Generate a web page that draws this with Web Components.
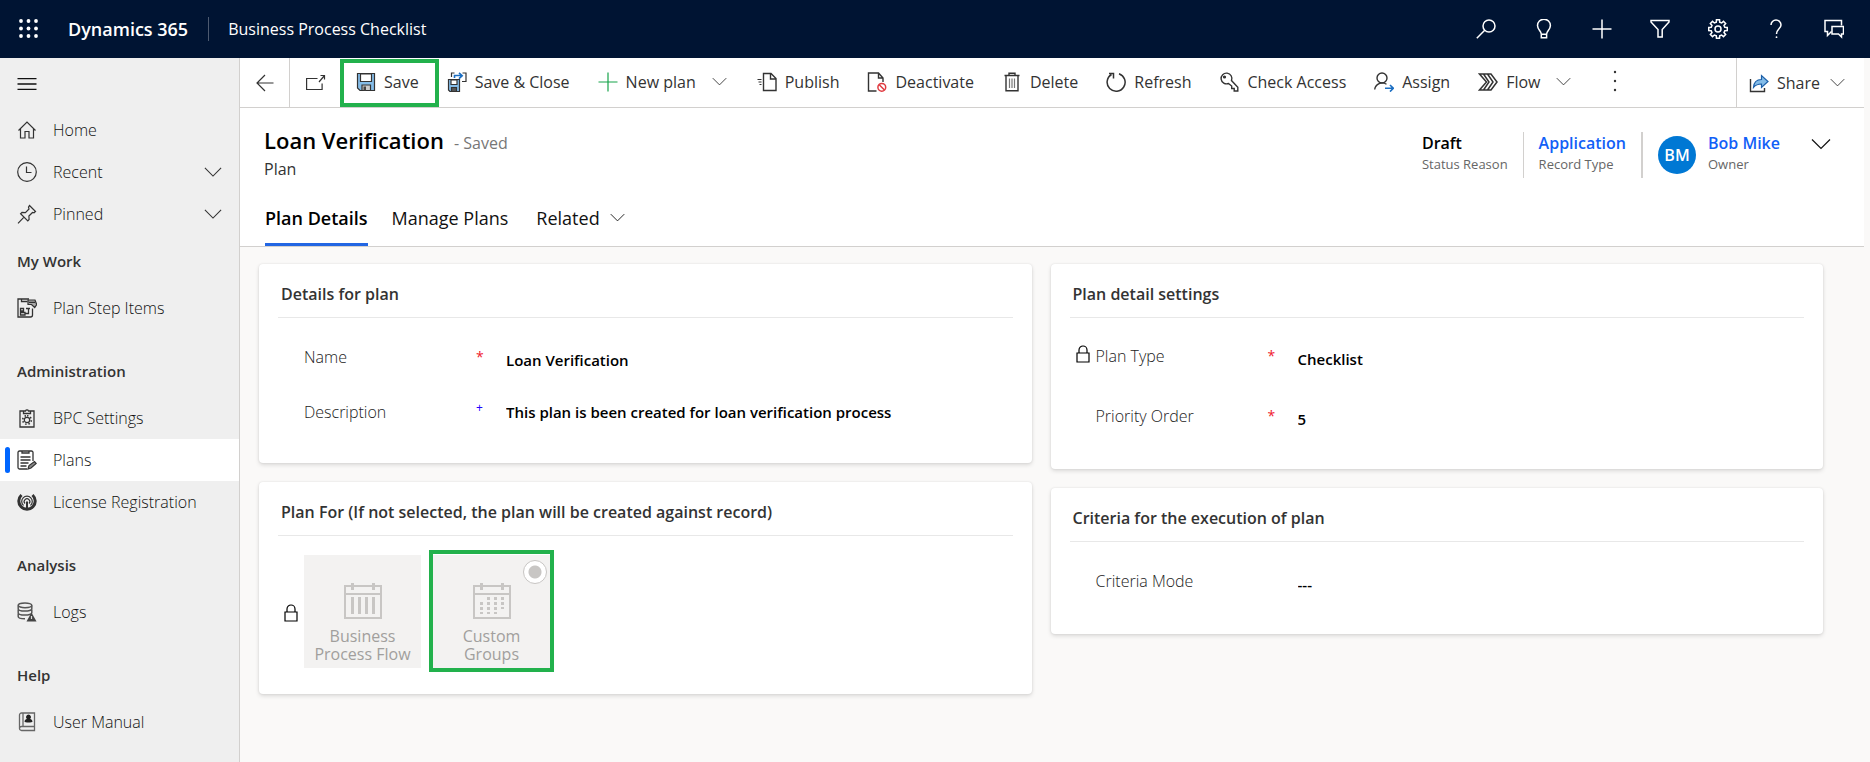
<!DOCTYPE html>
<html lang="en">
<head>
<meta charset="utf-8">
<title>Loan Verification - Business Process Checklist</title>
<style>
  body { margin: 0; background: #faf9f8; font: 300 16px/20px "Open Sans", "Noto Sans", sans-serif; color: #111; }
</style>
</head>
<body>
<plan-app></plan-app>
<script>
const define = (name, html, init) => {
  const template = document.createElement('template');
  template.innerHTML = html;
  customElements.define(name, class extends HTMLElement {
    constructor() {
      super();
      this.attachShadow({ mode: 'open' }).append(template.content.cloneNode(true));
    }
    connectedCallback() {
      if (init && !this.ready) init.call(this, this.shadowRoot);
      this.ready = true;
    }
  });
};

/* Outline of a gear wheel with n teeth */
const gear = (cx, cy, r, n, depth) => {
  let d = '';
  for (let i = 0; i < n; i++) {
    const a = i * 2 * Math.PI / n - Math.PI / 2, s = Math.PI / n;
    [[-.62, r - depth], [-.42, r], [.42, r], [.62, r - depth]].forEach(([k, q], j) => {
      d += (i || j ? 'L' : 'M') + (cx + q * Math.cos(a + k * s)).toFixed(2) + ' ' + (cy + q * Math.sin(a + k * s)).toFixed(2);
    });
  }
  return d + 'Z';
};

/* Icons: [width, height, markup]; strokes take the current colour */
const ICONS = {
  waffle: [20, 20, [2, 9.5, 17].map(y => [2, 9.5, 17].map(x => `<circle cx="${x}" cy="${y}" r="1.9" fill="currentColor" stroke="none"/>`).join('')).join('')],
  search: [20, 20, '<circle cx="13" cy="7" r="6"/><path d="M8.7 11.3 .8 19.2"/>'],
  bulb: [20, 20, '<path d="M7.3 15.2c0-3.2-3.8-4.4-3.8-8.6a6.3 6.3 0 0 1 12.9 0c0 4.2-3.8 5.4-3.8 8.6zM7.3 15.2v3.6h5.3v-3.6"/>'],
  plus: [20, 20, '<path d="M10 .5v19M.5 10h19"/>'],
  filter: [20, 20, '<path d="M1 1.500h18v1.500l-6.800 7.500v7.500h-4.200v-7.500L1 3z"/>'],
  gear: [20, 20, `<path d="${gear(10, 10, 9.4, 8, 2.4)}"/><circle cx="10" cy="10" r="3"/>`],
  help: [20, 20, '<path d="M5 6a5 5 0 1 1 10 0c0 3.600-4.500 4.300-4.500 9"/><circle cx="10.500" cy="18.200" r=".9" fill="currentColor" stroke="none"/>'],
  chat: [20, 20, '<path d="M17.500 6.500V1.500H1v11h2.500v4l4-4"/><path d="M8 7.500h11.500v7.500h-2v3l-3-3H8z"/>'],
  menu: [20, 12, '<path d="M.5.5h19M.5 6h19M.5 11.500h19"/>'],
  home: [20, 20, '<path d="M1.500 10.500 10 2l8.500 8.500M3.500 9v9h4.500v-6.500h4V18h4.500V9"/>'],
  clock: [20, 20, '<circle cx="10" cy="10" r="9.300"/><path d="M9.500 4.500v6h5"/>'],
  pin: [20, 20, '<path d="m12.500 1.500 6 6-1.500 1.300-1.500-.3-3.600 3.600.2 3.400-1.300 1.400L3.600 9.700 5 8.400l3.400.2L12 5l-.5-2zM7 13.200 1 19.300"/>'],
  chevron: [20, 20, '<path d="m1 5.500 9 9 9-9"/>'],
  back: [18, 18, '<path d="M17.500 9H1M9 1 1 9l8 8"/>'],
  popout: [20, 20, '<path d="M11.500 5.500H.6v11h15.500v-6M13 9l5.500-6.500M14.500 2.500h4v4"/>'],
  save: [20, 20, '<path fill="#84bce8" d="M1.500 1.500h17v17H4l-2.500-2.500z"/><path fill="#fff" d="M4.500 2h11v7.500h-11z"/><path fill="#ccc" d="M6 13h8.500v5.500H6z"/><path fill="#444" stroke="none" d="M7.500 14.500H10v4H7.500z"/>'],
  saveclose: [20, 20, '<path fill="#84bce8" d="M1.500 7.500h11v12H3l-1.500-1.500z"/><path fill="#fff" d="M4 8h6v4.500H4z"/><path fill="#555" d="M4.500 15.500h5v4h-5z"/><path d="M7.500 1H4.500v4M15.500 1H19v8.500h-4"/><path stroke="#1b6ec2" stroke-width="1.600" d="M7.500 6V3.500h7M12 .8l3.200 2.900L12 6.600"/>'],
  publish: [20, 20, '<path stroke-width="1.400" d="M6.500 1.500h7.500l5 5v12H6.500zM13.500 1.500V7H19"/><path d="M.5 7.500h4M1.500 10h3M2.500 12.500h2"/>'],
  deactivate: [20, 20, '<path stroke-width="1.400" d="M9.500 19H1.500V1h10l4.500 5v4M11.500 1v5H16"/><g stroke="#e03a40" stroke-width="1.500"><circle cx="14.800" cy="15.300" r="3.900"/><path d="m12.200 12.700 5.300 5.300"/></g>'],
  trash: [20, 20, '<path stroke-width="1.400" d="M2.500 3.500h15M7 3.500V1.300h6v2.200M4 3.500v15.200h12V3.500"/><path d="M7.500 6.500v9.500M10 6.500v9.500M12.500 6.500v9.500" stroke="#777"/>'],
  refresh: [20, 20, '<path stroke-width="1.500" d="M13 1.700a9 9 0 1 1-7.500.8M3 1.400h4.500v5"/>'],
  key: [20, 20, '<path stroke-width="1.400" d="M9.500 11.500a5.400 5.400 0 1 1 3-3l6.300 6.800v3.700h-3.600v-2.500h-2.500V14z"/><circle cx="5.500" cy="5" r="1" fill="currentColor"/>'],
  assign: [20, 20, '<g stroke-width="1.400"><circle cx="8" cy="6" r="5"/><path d="M.7 17.500a7.500 7.500 0 0 1 11.800-5.200"/><path stroke="#1b6ec2" stroke-width="1.600" d="M11 16.300h8M16 13l3.300 3.300L16 19.600"/></g>'],
  flow: [20, 20, '<path stroke-width="1.500" d="M1.500 2H13l6 8-6 8H1.500l7-8zM5.500 2l5.500 8-5.500 8M9.500 2l5.500 8-5.500 8"/>'],
  share: [20, 20, '<path stroke-width="1.400" d="M1.500 6v12.500h14V15"/><path fill="#84bce8" stroke="#1b5fa8" d="M4.500 14.500c.3-5 3-8 8-8V2.500L19 8.500l-6.500 6V11c-4 0-6 1-8 3.500z"/>'],
  dots: [4, 22, '<g fill="currentColor" stroke="none"><circle cx="2" cy="2" r="1.200"/><circle cx="2" cy="11" r="1.200"/><circle cx="2" cy="20" r="1.200"/></g>'],
  lock: [14, 18, '<path d="M1 8h12v9H1zM3 8V5a4 4 0 0 1 8 0v3"/>'],
  steps: [20, 20, '<path stroke-width="1.300" d="M15.500 10.500V17a2 2 0 0 1-2 2H1V1h11M4.500 1v2.500h6M3.500 10.500h3v2.500h-3zM9 10.500h4M11.500 10.500v5H8.500M3.500 14.500h4.500v2.500H3.500z"/><path fill="#aaa" d="M11 2h7l1.700 4.500-2 3-3.200-3H11zM12 4.300h6"/>'],
  clipboard: [20, 20, `<path stroke-width="1.300" d="M7 3H3v16h14V3h-4M6.500 5.500V3h2a1.600 1.600 0 0 1 3 0h2v2.500z"/><circle cx="10" cy="12" r="2.700"/><path stroke-width="1.600" stroke-dasharray="1.500 1.900" d="M10 7.700a4.300 4.300 0 1 1 0 8.600a4.300 4.300 0 1 1 0-8.600"/>`],
  plans: [20, 20, '<path stroke-width="1.300" d="M16 11V2.500A1.500 1.500 0 0 0 14.500 1h-12A1.500 1.500 0 0 0 1 2.500v15A1.500 1.500 0 0 0 2.500 19H10M5 1v2h7V1M3.500 7h10M3.500 10h10M3.500 13h8M3.500 16h6"/><path fill="#888" d="m11 19 1-3.500 5.500-4 1.700 2-5.200 4.500z"/>'],
  license: [20, 20, '<path stroke-width="3" d="M4.500 3a8.200 8.200 0 1 0 11 0"/><path stroke-width="1.200" d="M6.500 13.500a5.300 5.300 0 1 1 7 0M8 11.500a2.800 2.800 0 1 1 4 0"/><path stroke-width="2" d="M10 9.500V16"/>'],
  logs: [20, 20, '<g stroke="#555" stroke-width="1.500"><ellipse cx="8" cy="3.300" rx="6.800" ry="2.400"/><path d="M1.200 3.500v3.200c0 3.200 13.600 3.200 13.600 0V3.500M1.200 7.500v3.200c0 3.200 13.600 3.200 13.600 0V7.500M1.200 11.500v3c0 1.500 3 2.300 6.800 2.300"/></g><path fill="#444" stroke="none" d="m14.500 10.500 5 9h-10z"/><path stroke="#ddd" d="M14.500 14v3"/>'],
  manual: [20, 20, '<path stroke="#666" stroke-width="1.300" d="M17.500 1v17.500H4.500a2 2 0 0 1-2-2V3a2 2 0 0 1 2-2zM2.500 16a2 2 0 0 1 2-1.500h13M6 1v13.500"/><path fill="#222" stroke="none" d="M11.500 2.500a2.500 2.500 0 0 1 1.600 4.400c1.400.3 2.400 1.300 2.400 2.600s-8 1.300-8 0 1-2.300 2.400-2.600a2.500 2.500 0 0 1 1.600-4.400z"/>'],
  bars: [38, 36, '<g stroke-width="2"><path d="M1 3h36v32H1zM1 11h36"/><path stroke-width="3" d="M8.500 0v7M29.500 0v7M8.500 14v17M15.500 14v17M22.500 14v17M29.500 14v17"/></g>'],
  dates: [38, 36, '<g stroke-width="2"><path d="M1 3h36v32H1zM1 11h36"/><path stroke-width="3" d="M8.500 0v7M29.500 0v7"/><path stroke-width="3" stroke-dasharray="3 2" d="M15.500 14v17M22.500 14v17M29.500 14v12M8.500 19v12"/></g>']
};

customElements.define('ui-icon', class extends HTMLElement {
  static observedAttributes = ['name'];
  constructor() {
    super();
    this.attachShadow({ mode: 'open' });
  }
  attributeChangedCallback() { this.draw(); }
  connectedCallback() { this.draw(); }
  draw() {
    const icon = ICONS[this.getAttribute('name')];
    if (!icon) return;
    const [w, h, markup] = icon;
    const size = +this.getAttribute('size') || w;
    this.shadowRoot.innerHTML = `<style>:host{display:inline-flex;flex:none}svg{display:block}</style>
      <svg width="${size}" height="${Math.round(size * h / w)}" viewBox="0 0 ${w} ${h}" fill="none" stroke="currentColor" stroke-width="${this.getAttribute('weight') || 1.2}" aria-hidden="true">${markup}</svg>`;
  }
});

const BUTTON = 'button{font:inherit;color:inherit;background:none;border:0;margin:0;padding:0;cursor:pointer}';
const useIcon = function (root) { root.querySelector('ui-icon').setAttribute('name', this.getAttribute('icon')); };
const useHeading = function (root) { root.querySelector('h2').textContent = this.getAttribute('heading'); };

define('top-bar', `<style>${BUTTON}
  :host { display: flex; align-items: center; height: 58px; padding-right: 7px; box-sizing: border-box; background: #001433; color: #fff; }
  button { display: flex; align-items: center; justify-content: center; width: 58px; height: 56px; }
  .brand { font-size: 18px; font-weight: 600; margin-left: 10px; white-space: nowrap; }
  .app { color: #fff; font-weight: 400; text-decoration: none; margin-left: 20px; padding-left: 19px; border-left: 1px solid #4d5a70; line-height: 24px; white-space: nowrap; }
  .brand, .app { flex: none; }
  nav { display: flex; margin-left: auto; }
</style>
<button aria-label="Apps"><ui-icon name="waffle"></ui-icon></button>
<span class="brand">Dynamics 365</span><a class="app" href="#">Business Process Checklist</a>
<nav>
  <button aria-label="Search"><ui-icon name="search" weight="1.5"></ui-icon></button>
  <button aria-label="Ideas"><ui-icon name="bulb" weight="1.5"></ui-icon></button>
  <button aria-label="New"><ui-icon name="plus" weight="1.5"></ui-icon></button>
  <button aria-label="Filter"><ui-icon name="filter" weight="1.5"></ui-icon></button>
  <button aria-label="Settings"><ui-icon name="gear" weight="1.5"></ui-icon></button>
  <button aria-label="Help"><ui-icon name="help" weight="1.5"></ui-icon></button>
  <button aria-label="Assistant"><ui-icon name="chat" weight="1.5"></ui-icon></button>
</nav>`);

define('nav-item', `<style>
  :host { display: block; }
  a { display: flex; align-items: center; gap: 16px; height: 42px; padding: 0 17px; color: #111; text-decoration: none; position: relative; white-space: nowrap; }
  ui-icon { color: #333; }
  :host([current]) a { background: #fff; }
  :host([current]) a::before { content: ""; position: absolute; left: 5px; top: 8px; bottom: 8px; width: 5px; border-radius: 3px; background: #0066ff; }
  .more { display: none; margin-left: auto; }
  :host([expandable]) .more { display: inline-flex; }
</style><a href="#"><ui-icon></ui-icon><span><slot></slot></span><ui-icon class="more" name="chevron" size="18"></ui-icon></a>`, useIcon);

define('nav-group', `<style>
  :host { display: block; margin-bottom: 16px; }
  h2 { margin: 0; padding: 0 17px; font-size: 15px; font-weight: 600; line-height: 52px; color: #333; }
</style><h2></h2><slot></slot>`, useHeading);

define('side-nav', `<style>${BUTTON}
  :host { display: block; background: #efefef; border-right: 1px solid #d2d0ce; }
  button { display: flex; padding: 20px 17px 19px; }
</style><nav aria-label="Site map">
<button aria-label="Toggle navigation"><ui-icon name="menu" weight="1.5"></ui-icon></button>
<nav-item icon="home">Home</nav-item>
<nav-item icon="clock" expandable>Recent</nav-item>
<nav-item icon="pin" expandable>Pinned</nav-item>
<nav-group heading="My Work"><nav-item icon="steps">Plan Step Items</nav-item></nav-group>
<nav-group heading="Administration"><nav-item icon="clipboard">BPC Settings</nav-item><nav-item icon="plans" current>Plans</nav-item><nav-item icon="license">License Registration</nav-item></nav-group>
<nav-group heading="Analysis"><nav-item icon="logs">Logs</nav-item></nav-group>
<nav-group heading="Help"><nav-item icon="manual">User Manual</nav-item></nav-group>
</nav>`);

define('command-button', `<style>${BUTTON}
  :host { display: flex; position: relative; flex: none; }
  button { display: flex; align-items: center; gap: 8px; padding: 0 14px; white-space: nowrap; }
  .more { display: none; margin: 0 2px 0 8px; }
  :host([menu]) .more { display: inline-flex; }
  :host([highlight])::after { content: ""; position: absolute; inset: 1px -6px 0 -2px; border: 4px solid #22b14c; pointer-events: none; }
  :host([icon=plus]) ui-icon:first-child { color: #16a34a; }
</style><button><ui-icon></ui-icon><slot></slot><ui-icon class="more" name="chevron" size="15"></ui-icon></button>`, useIcon);

define('command-bar', `<style>${BUTTON}
  :host { display: flex; height: 49px; background: #fff; border-bottom: 1px solid #d2d0ce; color: #333; font-weight: 400; }
  command-button { padding-bottom: 2px; box-sizing: border-box; }
  .back, .pop { display: flex; align-items: center; justify-content: center; flex: none; }
  .back { border-right: 1px solid #d2d0ce; width: 50px; }
  .pop { width: 52px; }
  .dots { width: 56px; }
  .share { margin-left: auto; border-left: 1px solid #d2d0ce; display: flex; align-items: center; gap: 8px; padding: 0 19px 0 12px; }
  .share ui-icon:last-child { margin-left: 2px; }
</style>
<button class="back" aria-label="Go back"><ui-icon name="back"></ui-icon></button>
<button class="pop" aria-label="Open in new window"><ui-icon name="popout"></ui-icon></button>
<command-button icon="save" highlight>Save</command-button>
<command-button icon="saveclose">Save &amp; Close</command-button>
<command-button icon="plus" menu>New plan</command-button>
<command-button icon="publish">Publish</command-button>
<command-button icon="deactivate">Deactivate</command-button>
<command-button icon="trash">Delete</command-button>
<command-button icon="refresh">Refresh</command-button>
<command-button icon="key">Check Access</command-button>
<command-button icon="assign">Assign</command-button>
<command-button icon="flow" menu>Flow</command-button>
<button class="dots" aria-label="More commands"><ui-icon name="dots"></ui-icon></button>
<button class="share"><ui-icon name="share"></ui-icon>Share<ui-icon name="chevron" size="15"></ui-icon></button>`);

define('header-fact', `<style>
  :host { display: flex; align-items: flex-start; gap: 12px; height: 46px; padding: 0 15px; border-right: 1px solid #d2d0ce; white-space: nowrap; }
  :host([owner]) { border-right: 0; border-left: 1px solid #d2d0ce; }
  .value { display: block; font-weight: 600; line-height: 22px; color: #000; }
  .caption { display: block; font-size: 13px; font-weight: 400; line-height: 20px; color: #666; }
</style><slot name="lead"></slot><div><span class="value"><slot></slot></span><span class="caption"></span></div>`,
function (root) { root.querySelector('.caption').textContent = this.getAttribute('caption'); });

define('record-header', `<style>${BUTTON}
  :host { display: block; background: #fff; border-bottom: 1px solid #d2d0ce; }
  .top { display: flex; justify-content: space-between; align-items: flex-start; padding: 18px 33px 0 24px; }
  h1 { display: inline; margin: 0 6px 0 0; font-size: 22px; font-weight: 600; color: #000; line-height: 28px; }
  .state { font-weight: 400; color: #777; }
  .entity { font-weight: 400; line-height: 24px; color: #333; margin-top: 3px; }
  .facts { display: flex; padding-top: 6px; }
  a { color: #1160f7; text-decoration: none; }
  .avatar { width: 38px; height: 38px; margin-top: 4px; border-radius: 50%; background: #0078d4; color: #fff; font-weight: 600; line-height: 38px; text-align: center; }
  .expand { margin: 2px 0 0 16px; align-self: flex-start; }
  .tabs { display: flex; gap: 24px; padding: 16px 24px 0 25px; font-size: 18px; }
  .tabs button { display: flex; align-items: center; gap: 10px; height: 49px; padding-bottom: 5px; box-sizing: border-box; border-bottom: 3px solid transparent; font-weight: 400; color: #111; white-space: nowrap; }
  .tabs [aria-selected=true] { font-weight: 600; color: #000; border-color: #2266e3; }
  .tabs .menu { margin-left: 4px; }
</style>
<div class="top">
  <div><h1>Loan Verification</h1> <span class="state">- Saved</span><div class="entity">Plan</div></div>
  <div class="facts">
    <header-fact caption="Status Reason">Draft</header-fact>
    <header-fact caption="Record Type"><a href="#">Application</a></header-fact>
    <header-fact caption="Owner" owner><span slot="lead" class="avatar">BM</span><a href="#">Bob Mike</a></header-fact>
    <button class="expand" aria-label="Expand header"><ui-icon name="chevron"></ui-icon></button>
  </div>
</div>
<div class="tabs" role="tablist">
  <button role="tab" aria-selected="true">Plan Details</button>
  <button role="tab" aria-selected="false">Manage Plans</button>
  <button role="tab" aria-selected="false" class="menu">Related<ui-icon name="chevron" size="15"></ui-icon></button>
</div>`);

define('form-section', `<style>
  :host { display: block; background: #fff; border-radius: 4px; box-shadow: 0 2px 4px rgba(0,0,0,.13), 0 0 2px rgba(0,0,0,.1); padding: 8px 19px 0; }
  h2 { margin: 0; padding: 0 3px; font-size: 16px; font-weight: 600; line-height: 45px; color: #333; border-bottom: 1px solid #e8e8e8; white-space: nowrap; }
</style><h2></h2><slot></slot>`, useHeading);

define('form-field', `<style>
  :host { display: grid; grid-template-columns: 26px 172px 30px 1fr; align-items: center; height: 44px; }
  ui-icon { color: #000; padding: 0 6px; }
  label { color: #222; }
  .mark { font-size: 14px; line-height: 14px; font-weight: 400; align-self: start; padding-top: 15px; color: #f0202c; }
  input, select { appearance: none; font: inherit; font-size: 15px; font-weight: 600; color: #000; background: none; border: 0; outline: 0; padding: 5px 0 0; margin: 0; min-width: 0; width: 100%; height: 34px; opacity: 1; text-overflow: ellipsis; }
  :host([recommended]) .mark { color: #2200ff; font-size: 12px; line-height: 12px; padding-top: 12px; }
  :host([recommended]) input { padding-top: 0; }
</style><span class="lock"></span><label for="control"></label><span class="mark"></span>`,
function (root) {
  const get = name => this.getAttribute(name);
  root.querySelector('label').textContent = get('label');
  root.querySelector('.mark').textContent = this.hasAttribute('required') ? '*' : this.hasAttribute('recommended') ? '+' : '';
  if (this.hasAttribute('locked')) root.querySelector('.lock').innerHTML = '<ui-icon name="lock"></ui-icon>';
  const control = document.createElement(this.hasAttribute('choice') ? 'select' : 'input');
  control.id = 'control';
  if (control.tagName === 'SELECT') control.append(new Option(get('value')));
  else control.value = get('value');
  control.disabled = this.hasAttribute('locked');
  root.append(control);
});

define('choice-tile', `<style>
  :host { display: block; position: relative; }
  label { display: flex; flex-direction: column; align-items: center; box-sizing: border-box; width: 117px; height: 113px; padding-top: 28px; background: #f3f2f1; color: #a19f9d; font-weight: 400; line-height: 18px; text-align: center; }
  ui-icon { color: #c8c6c4; margin-bottom: 8px; }
  span { width: 100px; }
  input { appearance: none; position: absolute; top: 5px; right: 3px; width: 24px; height: 24px; margin: 0; border-radius: 50%; opacity: 0; }
  input:checked { opacity: 1; border: 1px solid #c8c6c4; background: radial-gradient(circle, #c8c6c4 0 6px, #fff 7px); }
  :host([highlight])::after { content: ""; position: absolute; inset: -5px -4px -4px; border: 4px solid #22b14c; pointer-events: none; }
</style><label><ui-icon></ui-icon><span><slot></slot></span><input type="radio" name="target" disabled></label>`,
function (root) {
  useIcon.call(this, root);
  root.querySelector('input').checked = this.hasAttribute('checked');
});

define('plan-form', `<style>
  :host { display: grid; grid-template-columns: 1fr 1fr; gap: 19px; padding: 17px 41px 32px 19px; align-items: start; }
  .column { display: grid; gap: 19px; min-width: 0; }
  .fields { display: grid; }
  .details { padding: 17px 0 29px; gap: 11px; }
  .settings { padding: 16px 0 31px; gap: 16px; }
  .criteria { padding: 17px 0 31px; }
  .tiles { display: flex; align-items: center; gap: 12px; padding: 19px 0 26px; }
  .tiles ui-icon { width: 14px; padding: 2px 6px 0; margin-right: -12px; color: #000; }
</style>
<div class="column">
  <form-section heading="Details for plan"><div class="fields details">
    <form-field label="Name" required value="Loan Verification"></form-field>
    <form-field label="Description" recommended value="This plan is been created for loan verification process"></form-field>
  </div></form-section>
  <form-section heading="Plan For (If not selected, the plan will be created against record)"><div class="tiles">
    <ui-icon name="lock"></ui-icon>
    <choice-tile icon="bars">Business Process Flow</choice-tile>
    <choice-tile icon="dates" checked highlight>Custom Groups</choice-tile>
  </div></form-section>
</div>
<div class="column">
  <form-section heading="Plan detail settings"><div class="fields settings">
    <form-field label="Plan Type" required locked choice value="Checklist"></form-field>
    <form-field label="Priority Order" required value="5"></form-field>
  </div></form-section>
  <form-section heading="Criteria for the execution of plan"><div class="fields criteria">
    <form-field label="Criteria Mode" choice value="---"></form-field>
  </div></form-section>
</div>`);

define('plan-app', `<style>
  :host { display: flex; flex-direction: column; min-height: 100vh; }
  .body { display: grid; grid-template-columns: 240px 1fr; flex: 1; }
  main { min-width: 0; padding-right: 6px; background: #faf9f8; }
</style><top-bar></top-bar>
<div class="body"><side-nav></side-nav><main><command-bar></command-bar><record-header></record-header><plan-form></plan-form></main></div>`);
</script>
</body>
</html>
